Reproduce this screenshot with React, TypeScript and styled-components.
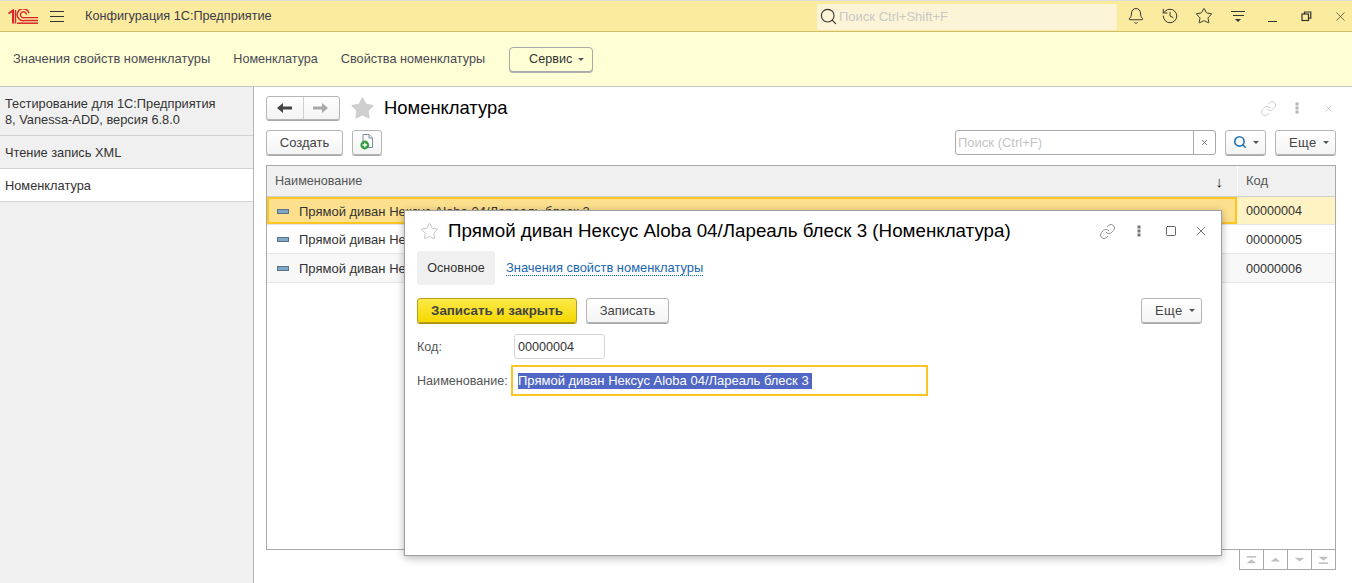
import React from 'react';
import styled, { createGlobalStyle } from 'styled-components';
import { Bell, History, Star, Link, X, Search, Square } from 'lucide-react';

const GlobalStyle = createGlobalStyle`
  html, body { margin: 0; padding: 0; background: #fff; }
  body {
    font-family: "Liberation Sans", Arial, sans-serif;
    font-size: 13px;
    color: #333;
  }
  * { box-sizing: border-box; }
`;

const rows = [
  { name: 'Прямой диван Нексус Aloba 04/Лареаль блеск 3', code: '00000004' },
  { name: 'Прямой диван Нексус Aloba 05/Лареаль блеск 3', code: '00000005' },
  { name: 'Прямой диван Нексус Aloba 06/Лареаль блеск 3', code: '00000006' },
];

function Logo() {
  return (
    <svg width="30" height="15" viewBox="0 0 30 15" fill="none" stroke="#d8262c">
      <path d="M0.5 4.5 L5 1.5 V14.5" strokeWidth="2" />
      <path d="M7.5 1 V14.5" strokeWidth="1.4" />
      <path d="M21 4.2 A6 6 0 1 0 17 11.4 H30" strokeWidth="1.5" />
      <path d="M18.4 5.6 A3 3 0 1 0 16.5 8.6 H30" strokeWidth="1.4" />
      <path d="M9 14.2 H30" strokeWidth="1.5" />
    </svg>
  );
}

function Caret() {
  return <CaretMark />;
}

function AddFileIcon() {
  return (
    <svg width="14" height="16" viewBox="0 0 14 16">
      <path d="M3 .5 H9 L12.5 4 V13.5 H3 Z" fill="#fff" stroke="#7d8c9c" />
      <path d="M9 .5 V4 H12.5" fill="#e6ebf0" stroke="#7d8c9c" />
      <circle cx="4.8" cy="11" r="4.4" fill="#2e9e3f" />
      <path d="M2.5 11 H7.1 M4.8 8.7 V13.3" stroke="#fff" strokeWidth="1.4" />
    </svg>
  );
}

function RowIcon() {
  return (
    <svg width="12" height="5" viewBox="0 0 12 5">
      <rect x="0.5" y="0.5" width="11" height="4" fill="#7ea7c8" stroke="#5b7286" />
    </svg>
  );
}

function PagerIcon({ dir, edge }: { dir: 'up' | 'down'; edge?: boolean }) {
  const tri = dir === 'up' ? 'M7 2 L13 7 H1 Z' : 'M1 2 H13 L7 7 Z';
  const shift = edge ? (dir === 'up' ? 'translate(0 2)' : 'translate(0 -1)') : 'translate(0 0)';
  return (
    <svg width="11" height="8" viewBox="0 0 14 10" fill="#bfbfbf">
      <path d={tri} transform={shift} />
      {edge && <rect x="1" y={dir === 'up' ? 0 : 8} width="12" height="2" />}
    </svg>
  );
}

function MoreDots({ color }: { color: string }) {
  return (
    <svg width="4" height="12" viewBox="0 0 4 12" fill={color}>
      <rect x="0.5" y="0.5" width="3" height="3" />
      <rect x="0.5" y="4.5" width="3" height="3" />
      <rect x="0.5" y="8.5" width="3" height="3" />
    </svg>
  );
}

export default function App() {
  return (
    <Page>
      <GlobalStyle />
      <TopBar>
        <LogoBox><Logo /></LogoBox>
        <Burger><span /><span /><span /></Burger>
        <AppTitle>Конфигурация 1С:Предприятие</AppTitle>
        <GlobalSearch>
          <Search size={19} strokeWidth={1.4} color="#333" />
          <span>Поиск Ctrl+Shift+F</span>
        </GlobalSearch>
        <TopIcons>
          <Bell size={18} strokeWidth={1.3} />
          <History size={18} strokeWidth={1.3} />
          <Star size={18} strokeWidth={1.3} />
          <FilterLines><i /><i /><b /></FilterLines>
          <WindowMin />
          <svg width="11" height="11" viewBox="0 0 11 11" fill="none" stroke="#333" strokeWidth="1.2">
            <rect x="1" y="3" width="6.5" height="6.5" />
            <path d="M3.5 3 V1 H9.8 V7.2 H7.5" />
          </svg>
          <X size={15} strokeWidth={1.1} />
        </TopIcons>
      </TopBar>

      <SectionBar>
        <SectionLink $size={12.9}>Значения свойств номенклатуры</SectionLink>
        <SectionLink $size={12.6}>Номенклатура</SectionLink>
        <SectionLink $size={12.7}>Свойства номенклатуры</SectionLink>
        <ServiceButton>Сервис<Caret /></ServiceButton>
      </SectionBar>

      <Body>
        <Sidebar>
          <SideItem>Тестирование для 1С:Предприятия 8, Vanessa-ADD, версия 6.8.0</SideItem>
          <SideItem>Чтение запись XML</SideItem>
          <SideItem $active>Номенклатура</SideItem>
        </Sidebar>

        <Main>
          <TitleRow>
            <NavGroup>
              <NavCell>
                <svg width="16" height="10" viewBox="0 0 16 10" fill="#444"><path d="M0 5 L6 0 V3.5 H15 V6.5 H6 V10 Z" /></svg>
              </NavCell>
              <NavCell>
                <svg width="16" height="10" viewBox="0 0 16 10" fill="#a8a8a8"><path d="M15 5 L9 0 V3.5 H0 V6.5 H9 V10 Z" /></svg>
              </NavCell>
            </NavGroup>
            <Star size={25} fill="#cfcfcf" color="#cfcfcf" strokeWidth={1} />
            <PageTitle>Номенклатура</PageTitle>
            <TitleTools>
              <Link size={17} strokeWidth={1} color="#bdbdbd" />
              <MoreDots color="#b4b4b4" />
              <X size={11} strokeWidth={1.2} color="#a8a8a8" />
            </TitleTools>
          </TitleRow>

          <CommandRow>
            <Button $width={77}>Создать</Button>
            <Button $width={30}><AddFileIcon /></Button>
            <SearchBox>
              <span>Поиск (Ctrl+F)</span>
              <ClearCell><X size={9} strokeWidth={2} color="#555" /></ClearCell>
            </SearchBox>
            <Button $width={41}>
              <Search size={14} strokeWidth={2.8} color="#2a76b4" /><Caret />
            </Button>
            <MoreButton>Еще<Caret /></MoreButton>
          </CommandRow>

          <ListTable>
            <HeaderRow>
              <NameHead>Наименование<SortArrow>↓</SortArrow></NameHead>
              <CodeHead>Код</CodeHead>
            </HeaderRow>
            {rows.map((row, i) => (
              <DataRow key={row.code} $selected={i === 0} $alt={i === 2}>
                <NameCell $selected={i === 0}><RowIcon />{row.name}</NameCell>
                <CodeCell $selected={i === 0}>{row.code}</CodeCell>
              </DataRow>
            ))}
          </ListTable>

          <Pager>
            <PagerCell><PagerIcon dir="up" edge /></PagerCell>
            <PagerCell><PagerIcon dir="up" /></PagerCell>
            <PagerCell><PagerIcon dir="down" /></PagerCell>
            <PagerCell><PagerIcon dir="down" edge /></PagerCell>
          </Pager>
        </Main>
      </Body>

      <Modal>
        <ModalHead>
          <Star size={19} strokeWidth={1} color="#b5b5b5" />
          <ModalTitle>Прямой диван Нексус Aloba 04/Лареаль блеск 3 (Номенклатура)</ModalTitle>
          <ModalTools>
            <Link size={17} strokeWidth={1} color="#666" />
            <MoreDots color="#777" />
            <Square size={12} strokeWidth={1.5} color="#333" />
            <X size={16} strokeWidth={1.1} color="#444" />
          </ModalTools>
        </ModalHead>
        <Tabs>
          <ActiveTab>Основное</ActiveTab>
          <TabLink>Значения свойств номенклатуры</TabLink>
        </Tabs>
        <ModalCommands>
          <PrimaryButton>Записать и закрыть</PrimaryButton>
          <Button $width={83}>Записать</Button>
          <PushRight><MoreButton>Еще<Caret /></MoreButton></PushRight>
        </ModalCommands>
        <CodeFieldRow>
          <FieldLabel>Код:</FieldLabel>
          <CodeInput>00000004</CodeInput>
        </CodeFieldRow>
        <NameFieldRow>
          <FieldLabel>Наименование:</FieldLabel>
          <NameInput><Selected>Прямой диван Нексус Aloba 04/Лареаль блеск 3</Selected></NameInput>
        </NameFieldRow>
      </Modal>
    </Page>
  );
}

const Page = styled.div`
  position: relative;
  width: 1352px;
  height: 583px;
  display: flex;
  flex-direction: column;
  overflow: hidden;
`;

const TopBar = styled.div`
  height: 32px;
  flex: none;
  display: flex;
  align-items: center;
  background: #fbeb9e;
  border-top: 1px solid #dedede;
  border-bottom: 1px solid #d0bd6c;
`;

const LogoBox = styled.div`
  width: 50px;
  flex: none;
  padding-left: 8px;
  display: flex;
`;

const Burger = styled.div`
  width: 35px;
  flex: none;
  display: flex;
  flex-direction: column;
  gap: 4px;
  span {
    display: block;
    width: 14px;
    height: 1px;
    background: #333;
  }
`;

const AppTitle = styled.div`
  width: 732px;
  flex: none;
  font-size: 12.7px;
  color: #3b3b4a;
`;

const GlobalSearch = styled.div`
  width: 300px;
  height: 26px;
  flex: none;
  margin-top: 1px;
  padding-left: 2px;
  display: flex;
  align-items: center;
  gap: 1px;
  background: #fcf4d6;
  border-radius: 2px;
  color: #c8c8c8;
`;

const TopIcons = styled.div`
  flex: none;
  margin-left: 2px;
  display: grid;
  grid-template-columns: repeat(7, 34px);
  justify-items: center;
  align-items: center;
  color: #333;
`;

const FilterLines = styled.div`
  width: 14px;
  display: flex;
  flex-direction: column;
  align-items: center;
  gap: 3px;
  i {
    display: block;
    height: 1px;
    background: #333;
  }
  i:nth-child(1) { width: 14px; }
  i:nth-child(2) { width: 11px; }
  b {
    width: 0;
    height: 0;
    border-left: 3px solid transparent;
    border-right: 3px solid transparent;
    border-top: 3px solid #333;
  }
`;

const WindowMin = styled.div`
  width: 9px;
  height: 1px;
  margin-top: 10px;
  background: #333;
`;

const SectionBar = styled.div`
  height: 55px;
  flex: none;
  padding: 0 13px;
  display: flex;
  align-items: center;
  gap: 23px;
  background: #ffffd5;
  border-bottom: 1px solid #c4c4c4;
`;

const SectionLink = styled.div<{ $size: number }>`
  height: 16px;
  line-height: 16px;
  font-size: ${(p) => p.$size}px;
  color: #4a4a55;
`;

const ServiceButton = styled.div`
  width: 84px;
  height: 25px;
  margin-left: 1px;
  padding-left: 19px;
  display: flex;
  align-items: center;
  background: #ffffd5;
  border: 1px solid #a8a8a8;
  border-radius: 4px;
  box-shadow: 0 1px 0 #b0b0b0;
  font-size: 12.6px;
`;

const CaretMark = styled.span`
  display: inline-block;
  width: 0;
  height: 0;
  margin-left: 6px;
  border-left: 3px solid transparent;
  border-right: 3px solid transparent;
  border-top: 3px solid #555;
`;

const Body = styled.div`
  flex: 1;
  display: flex;
  min-height: 0;
`;

const Sidebar = styled.div`
  width: 254px;
  flex: none;
  background: #f0f0f0;
  border-right: 1px solid #b5b5b5;
`;

const SideItem = styled.div<{ $active?: boolean }>`
  padding: 9px 30px 7px 5px;
  line-height: 16px;
  font-size: 12.8px;
  background: ${(p) => (p.$active ? '#fff' : 'transparent')};
  border-bottom: 1px solid #d2d2d2;
`;

const Main = styled.div`
  flex: 1;
  min-width: 0;
  padding: 8px 16px 0 12px;
  display: flex;
  flex-direction: column;
`;

const TitleRow = styled.div`
  height: 26px;
  display: flex;
  align-items: center;
`;

const NavGroup = styled.div`
  width: 74px;
  height: 24px;
  margin-right: 10px;
  display: flex;
  background: linear-gradient(#fff, #f3f3f3);
  border: 1px solid #b5b5b5;
  border-radius: 3px;
  box-shadow: 0 1px 0 #a8a8a8;
`;

const NavCell = styled.div`
  flex: 1;
  display: flex;
  align-items: center;
  justify-content: center;
  & + & { border-left: 1px solid #d0d0d0; }
`;

const PageTitle = styled.div`
  margin-left: 9px;
  font-size: 18.4px;
  color: #000;
`;

const TitleTools = styled.div`
  margin-left: auto;
  width: 76px;
  padding-right: 2px;
  display: grid;
  grid-template-columns: 35px 28px 11px;
  align-items: center;
`;

const CommandRow = styled.div`
  height: 26px;
  margin-top: 8px;
  display: flex;
  align-items: center;
  gap: 9px;
`;

const Button = styled.div<{ $width: number }>`
  width: ${(p) => p.$width}px;
  height: 25px;
  flex: none;
  display: flex;
  align-items: center;
  justify-content: center;
  background: linear-gradient(#fff, #f4f4f4);
  border: 1px solid #b5b5b5;
  border-radius: 3px;
  box-shadow: 0 1px 0 #a8a8a8;
  color: #444;
`;

const MoreButton = styled.div`
  width: 61px;
  height: 25px;
  flex: none;
  padding-left: 13px;
  display: flex;
  align-items: center;
  background: linear-gradient(#fff, #f4f4f4);
  border: 1px solid #b5b5b5;
  border-radius: 3px;
  box-shadow: 0 1px 0 #a8a8a8;
  color: #444;
  letter-spacing: 0.4px;
`;

const SearchBox = styled.div`
  width: 261px;
  height: 25px;
  margin-left: auto;
  display: flex;
  align-items: center;
  justify-content: space-between;
  padding-left: 2px;
  border: 1px solid #a8a8a8;
  border-radius: 3px;
  color: #c4c4c4;
`;

const ClearCell = styled.div`
  width: 22px;
  height: 100%;
  display: flex;
  align-items: center;
  justify-content: center;
  border-left: 1px solid #a8a8a8;
`;

const ListTable = styled.div`
  height: 385px;
  margin-top: 10px;
  flex: none;
  border: 1px solid #a8a8a8;
`;

const HeaderRow = styled.div`
  height: 31px;
  display: flex;
  background: #f0f0f0;
  border-bottom: 1px solid #d0d0d0;
`;

const NameHead = styled.div`
  flex: 1;
  padding: 0 14px 0 8px;
  display: flex;
  align-items: center;
  justify-content: space-between;
  font-size: 12.6px;
  color: #555;
`;

const SortArrow = styled.span`
  font-size: 15px;
  color: #222;
`;

const CodeHead = styled.div`
  width: 98px;
  padding: 0 0 2px 8px;
  display: flex;
  align-items: center;
  border-left: 1px solid #fff;
  color: #555;
`;

const DataRow = styled.div<{ $selected?: boolean; $alt?: boolean }>`
  height: ${(p) => (p.$selected ? 28 : 29)}px;
  display: flex;
  background: ${(p) => (p.$alt ? '#f8f8f8' : '#fff')};
  border-bottom: 1px solid #e4e4e4;
`;

const NameCell = styled.div<{ $selected?: boolean }>`
  flex: 1;
  padding: 1px 0 0 8px;
  display: flex;
  align-items: center;
  gap: 10px;
  background: ${(p) => (p.$selected ? '#fde08d' : 'transparent')};
  border: ${(p) => (p.$selected ? '2px solid #fcc522' : '2px solid transparent')};
`;

const CodeCell = styled.div<{ $selected?: boolean }>`
  width: 98px;
  padding: 1px 0 0 9px;
  display: flex;
  align-items: center;
  font-size: 12.6px;
  background: ${(p) => (p.$selected ? '#fff3c4' : 'transparent')};
`;

const Pager = styled.div`
  width: 97px;
  height: 21px;
  margin-left: auto;
  margin-top: -1px;
  display: flex;
  border: 1px solid #a8a8a8;
`;

const PagerCell = styled.div`
  flex: 1;
  display: flex;
  align-items: center;
  justify-content: center;
  & + & { border-left: 1px solid #a8a8a8; }
`;

const Modal = styled.div`
  position: absolute;
  left: 404px;
  top: 210px;
  width: 818px;
  height: 346px;
  padding: 0 19px 0 12px;
  background: #fff;
  border: 1px solid #a0a0a0;
  box-shadow: 0 2px 8px rgba(0, 0, 0, 0.3);
`;

const ModalHead = styled.div`
  height: 40px;
  padding-left: 3px;
  display: flex;
  align-items: center;
`;

const ModalTitle = styled.div`
  margin-left: 9px;
  font-size: 18.75px;
  color: #000;
  white-space: nowrap;
`;

const ModalTools = styled.div`
  margin-left: auto;
  margin-right: -7px;
  flex: none;
  display: grid;
  grid-template-columns: 38px 28px 28px 16px;
  align-items: center;
`;

const Tabs = styled.div`
  display: flex;
  align-items: center;
  gap: 11px;
`;

const ActiveTab = styled.div`
  width: 78px;
  height: 34px;
  display: flex;
  align-items: center;
  justify-content: center;
  background: #f0f0f0;
  border-radius: 3px;
  font-size: 12.6px;
`;

const TabLink = styled.div`
  margin-top: 1px;
  font-size: 12.9px;
  color: #1a65b0;
  border-bottom: 1px dotted #1a65b0;
  line-height: 14px;
`;

const ModalCommands = styled.div`
  margin-top: 13px;
  display: flex;
  align-items: center;
  gap: 9px;
`;

const PrimaryButton = styled.div`
  width: 160px;
  height: 25px;
  display: flex;
  align-items: center;
  justify-content: center;
  background: linear-gradient(#fce94a, #f5d800);
  border: 1px solid #b89f1a;
  border-radius: 3px;
  box-shadow: 0 1px 0 #a89000;
  font-size: 13.3px;
  font-weight: 700;
  color: #444;
`;

const PushRight = styled.div`
  margin-left: auto;
`;

const FieldRow = styled.div`
  display: flex;
  align-items: center;
`;

const CodeFieldRow = styled(FieldRow)`
  margin-top: 11px;
`;

const NameFieldRow = styled(FieldRow)`
  margin-top: 6px;
`;

const FieldLabel = styled.div`
  width: 94px;
  flex: none;
  font-size: 12.6px;
  color: #555;
`;

const CodeInput = styled.div`
  width: 91px;
  height: 25px;
  margin-left: 3px;
  padding-left: 3px;
  display: flex;
  align-items: center;
  font-size: 12.6px;
  border: 1px solid #d6d6d6;
  border-radius: 3px;
`;

const NameInput = styled.div`
  width: 417px;
  height: 31px;
  padding-left: 5px;
  display: flex;
  align-items: center;
  border: 2px solid #fcc522;
`;

const Selected = styled.span`
  padding-right: 3px;
  background: #5067c5;
  color: #fff;
  line-height: 16px;
`;
